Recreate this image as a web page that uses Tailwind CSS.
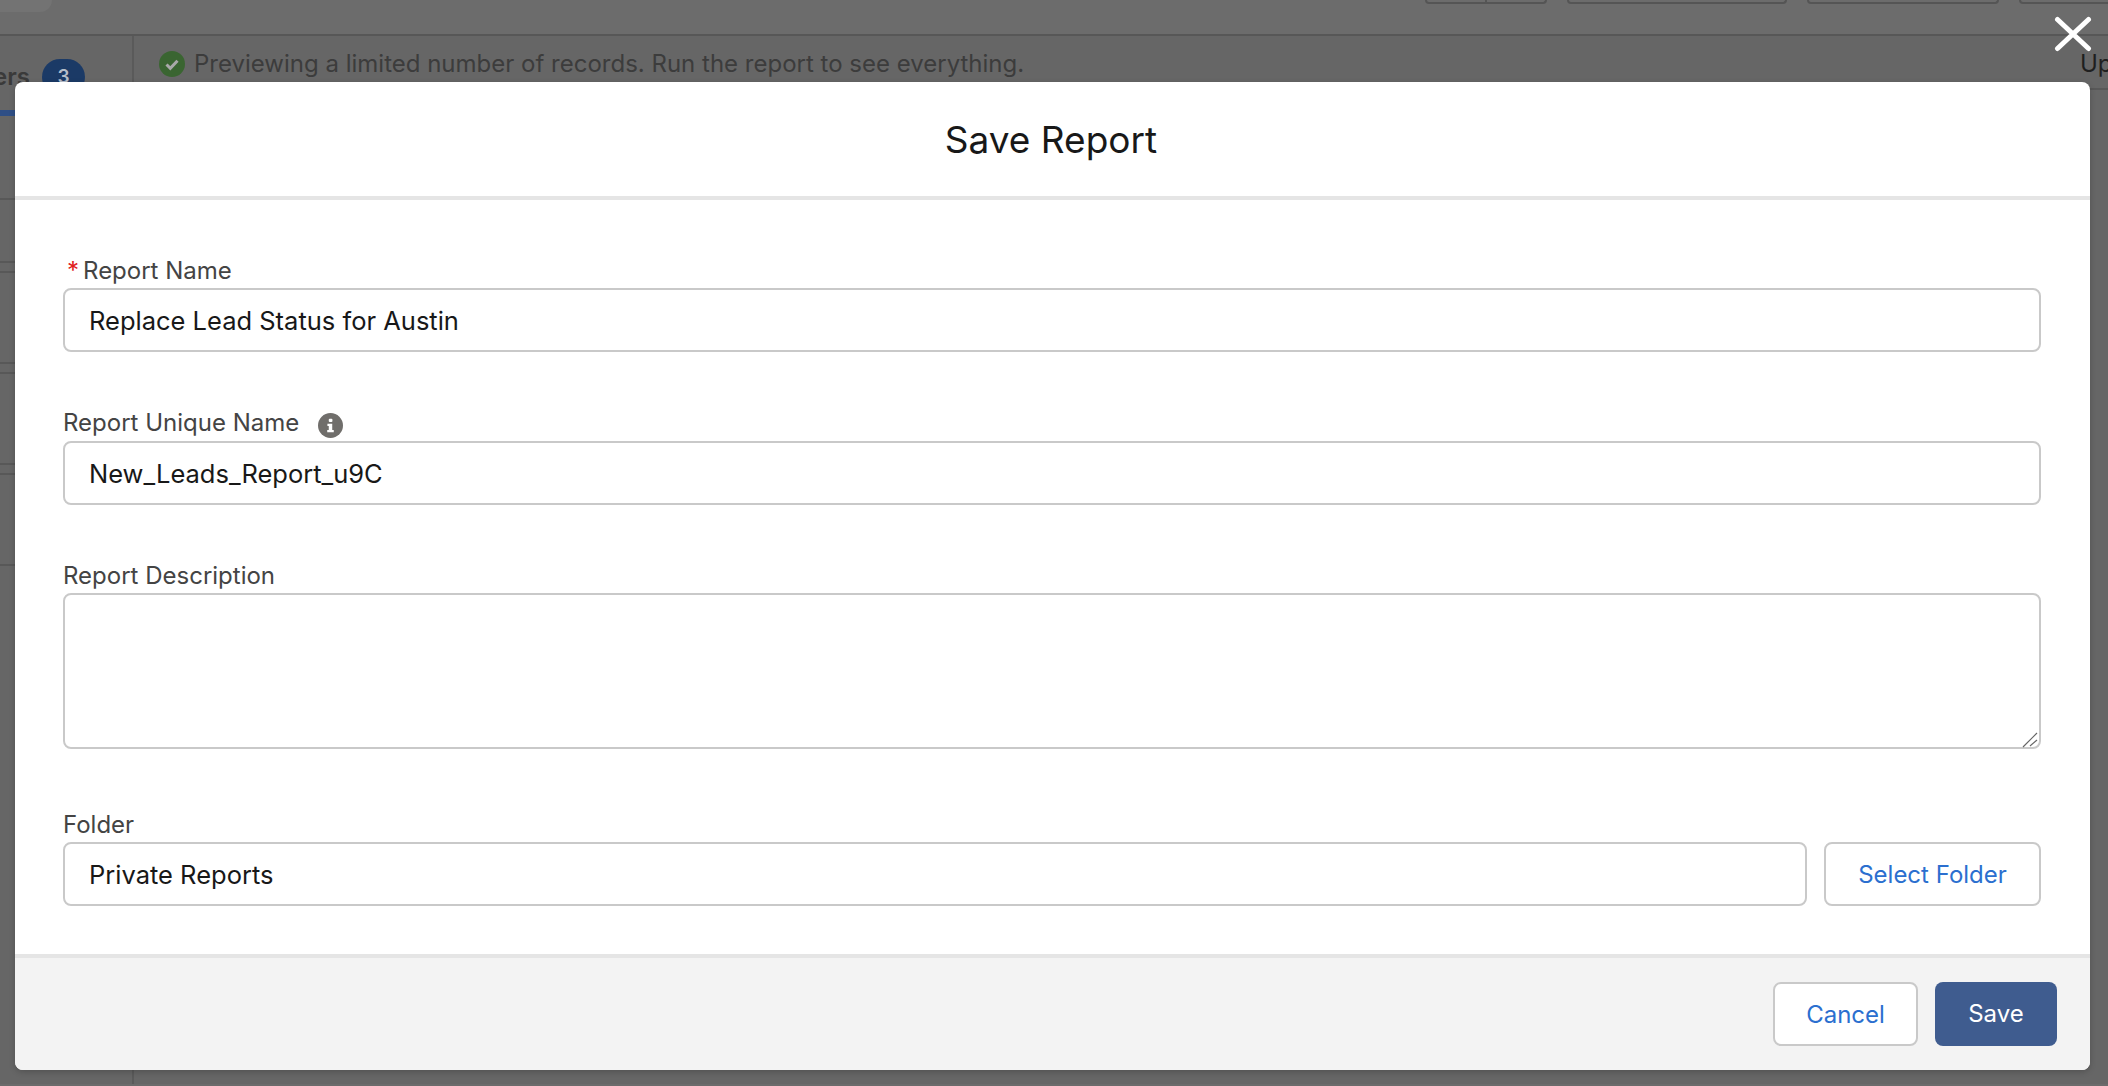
<!DOCTYPE html>
<html lang="en">

<head>
    <meta charset="UTF-8">
    <title>Save Report</title>
    <script src="https://cdn.jsdelivr.net/npm/@tailwindcss/browser@4"></script>
</head>

<body class="h-[1086px] overflow-hidden bg-[#6b6b6b] font-['Inter',sans-serif]">
    <!-- Dimmed page behind the modal -->
    <div class="flex h-[34px] justify-between bg-[#6c6c6c]">
        <div class="h-[12px] w-[52px] rounded-br-[16px] bg-[#737373]"></div>
        <div class="flex h-[4px] gap-[20px]">
            <div class="flex h-[4px] w-[122px] rounded-b-[6px] border-x-2 border-b-2 border-[#555]">
                <div class="w-[60px] border-r-2 border-[#555]"></div>
            </div>
            <div class="h-[4px] w-[220px] rounded-b-[6px] border-x-2 border-b-2 border-[#555]"></div>
            <div class="h-[4px] w-[192px] rounded-b-[6px] border-x-2 border-b-2 border-[#555]"></div>
            <div class="-mr-[20px] h-[4px] w-[109px] rounded-b-[6px] border-x-2 border-b-2 border-[#555]"></div>
        </div>
    </div>
    <div class="flex h-[1050px] border-t-2 border-[#575757] bg-[#666666]">
        <div class="w-[134px] shrink-0 border-r-2 border-[#5a5a5a]">
            <div class="flex h-[74px] items-start justify-end overflow-hidden pr-[47px] pt-[23px]">
                <span class="mt-[3px] text-[24px] leading-[30px] font-semibold text-[#3a3a3a]">ers</span>
                <span class="ml-[12px] flex h-[36px] w-[43px] shrink-0 items-center justify-center rounded-full bg-[#1b3a66] text-[19px] font-semibold text-[#b5bdc9]">3</span>
            </div>
            <div class="h-[6px] bg-[#2f4f86]"></div>
            <div class="mt-[82px] border-t-2 border-[#585858]"></div>
            <div class="mt-[61px] border-t-2 border-[#585858]"></div>
            <div class="mt-[8px] border-t-2 border-[#585858]"></div>
            <div class="mt-[89px] border-t-2 border-[#585858]"></div>
            <div class="mt-[8px] border-t-2 border-[#585858]"></div>
            <div class="mt-[89px] border-t-2 border-[#585858]"></div>
            <div class="mt-[8px] border-t-2 border-[#585858]"></div>
            <div class="mt-[89px] border-t-2 border-[#585858]"></div>
        </div>
        <div class="min-w-0 flex-1">
            <div class="flex h-[54px] items-start justify-between border-b-2 border-[#585858] pl-[25px] pt-[15px]">
                <div class="flex items-center gap-[9px]">
                    <svg class="h-[26px] w-[26px]" viewBox="0 0 26 26">
                        <circle cx="13" cy="13" r="13" fill="#3a6531"></circle>
                        <path d="M7.5 13.5l3.8 3.8 7.2-7.6" fill="none" stroke="#a9a9a9" stroke-width="3"></path>
                    </svg>
                    <span class="text-[24px] leading-[26px] text-[#3c3c3c]">Previewing a limited number of records. Run the report to see everything.</span>
                </div>
                <span class="w-[28px] overflow-hidden text-[24px] leading-[26px] text-[#1f1f1f]">Up</span>
            </div>
        </div>
    </div>

    <!-- Close icon -->
    <svg class="absolute left-[2054px] top-[16px] h-[36px] w-[38px]" viewBox="0 0 38 36">
        <path d="M3.5 3.5L34.5 32.5M34.5 3.5L3.5 32.5" fill="none" stroke="#fff" stroke-width="5" stroke-linecap="round"></path>
    </svg>

    <!-- Modal -->
    <div class="absolute left-[15px] top-[82px] flex h-[988px] w-[2075px] flex-col overflow-hidden rounded-[8px] bg-white shadow-[0_2px_6px_rgba(0,0,0,0.2)]">
        <div class="flex h-[118px] shrink-0 items-center justify-center border-b-4 border-[#e5e5e5] pr-[3px] pt-[2px]">
            <h2 class="text-[37px] leading-[44px] text-[#181818]">Save Report</h2>
        </div>

        <div class="flex-1 px-[48px] pt-[52px] text-[#181818]">
            <label class="flex h-[36px] items-center pl-[4px] pt-[2px] text-[24px] text-[#444444]"><span class="mr-[4px] text-[#e02020]">*</span>Report Name</label>
            <input readonly value="Replace Lead Status for Austin" class="block h-[64px] w-[1978px] rounded-[8px] border-2 border-[#c9c9c9] px-[24px] text-[25.5px] outline-none">

            <label class="mt-[53px] flex h-[36px] items-center text-[24px] text-[#444444]">Report Unique Name
                <svg class="ml-[19px] mt-[4px] h-[25px] w-[25px]" viewBox="0 0 26 26">
                    <circle cx="13" cy="13" r="13" fill="#706e6b"></circle>
                    <rect x="11.2" y="6" width="3.8" height="3.4" rx="1" fill="#fff"></rect>
                    <path d="M9.8 11.2h5v6.6h1.6v2.2H9.6v-2.2h1.6v-4.4H9.8z" fill="#fff"></path>
                </svg>
            </label>
            <input readonly value="New_Leads_Report_u9C" class="block h-[64px] w-[1978px] rounded-[8px] border-2 border-[#c9c9c9] px-[24px] text-[25.5px] outline-none">

            <label class="mt-[52px] flex h-[36px] items-center pt-[2px] text-[24px] text-[#444444]">Report Description</label>
            <div class="relative h-[156px] w-[1978px]">
                <textarea readonly class="block h-full w-full resize-none rounded-[8px] border-2 border-[#c9c9c9] outline-none"></textarea>
                <svg class="absolute bottom-[1px] right-[3px] h-[16px] w-[16px]" viewBox="0 0 16 16">
                    <path d="M1 15L15 1M8 14l7-6" fill="none" stroke="#666" stroke-width="1.2"></path>
                </svg>
            </div>

            <label class="mt-[57px] flex h-[36px] items-center pt-[2px] text-[24px] text-[#444444]">Folder</label>
            <div class="flex gap-[17px]">
                <input readonly value="Private Reports" class="block h-[64px] w-[1744px] rounded-[8px] border-2 border-[#c9c9c9] px-[24px] text-[25.5px] outline-none">
                <button class="h-[64px] w-[217px] rounded-[8px] border-2 border-[#c9c9c9] pt-[2px] text-[24px] text-[#2b6fcf]">Select Folder</button>
            </div>
        </div>

        <div class="flex h-[116px] shrink-0 items-center justify-end gap-[17px] border-t-4 border-[#e5e5e5] bg-[#f3f3f3] pr-[33px]">
            <button class="h-[64px] w-[145px] rounded-[8px] border-2 border-[#c9c9c9] bg-white pt-[2px] text-[24px] text-[#2b6fcf]">Cancel</button>
            <button class="h-[64px] w-[122px] rounded-[8px] bg-[#3f5c8f] text-[24px] text-white">Save</button>
        </div>
    </div>
</body>
</html>
